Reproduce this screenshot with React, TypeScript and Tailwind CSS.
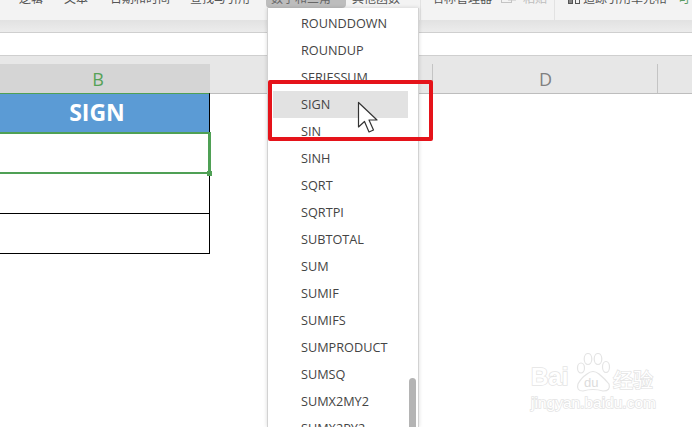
const FONT = "font-['Open_Sans','Noto_Sans',sans-serif]";
const ITEMS = ["ROUNDDOWN","ROUNDUP","SERIESSUM","SIGN","SIN","SINH","SQRT","SQRTPI","SUBTOTAL","SUM","SUMIF","SUMIFS","SUMPRODUCT","SUMSQ","SUMX2MY2","SUMX2PY2"];
const TABS: [string, string][] = [["逻辑","w-[45px]"],["文本","w-[46px]"],["日期和时间","w-[80px]"],["查找与引用","w-[76px]"]];
const CJK = "font-['Noto_Sans_CJK_SC',sans-serif]";

function Toolbar() {
  return (
    <div className="h-[20px] bg-[#f3f3f3] overflow-hidden">
      <div className={`flex items-start -mt-[8px] pl-[19px] h-[28px] text-[12px] leading-[12px] text-[#555] whitespace-nowrap ${CJK}`}>
        {TABS.map(([t, w]) => <span key={t} className={`${w} h-[16px]`}>{t}</span>)}
        <span className="w-[80px] h-[16px] rounded-b-[4px] bg-[#bdbdbd] pl-[5px] text-[#666]">数学和三角</span>
        <span className="w-[74px] pl-[6px]">其他函数</span>
        <span className="w-px h-[28px] bg-[#e2e2e2]" />
        <span className="w-[80px] pl-[11px]">名称管理器</span>
        <svg className="mt-[1px] mr-[7px]" width="15" height="11" viewBox="0 0 15 11" fill="none" stroke="#c4c4c4">
          <rect x="0.5" y="0.5" width="10" height="9" />
          <rect x="7.5" y="-3" width="7" height="10" fill="#f3f3f3" />
        </svg>
        <span className="w-[31px] text-[#bdbdbd]">粘贴</span>
        <span className="w-px h-[28px] bg-[#e2e2e2]" />
        <svg className="mt-[1px] ml-[13px] mr-[3px]" width="12" height="11" viewBox="0 0 12 11" fill="none" stroke="#555">
          <rect x="3.5" y="0.5" width="5" height="3" />
          <rect x="0.5" y="6.5" width="4" height="4" fill="#888" />
          <rect x="7.5" y="6.5" width="4" height="4" />
        </svg>
        <span className="w-[95px]">追踪引用单元格</span>
        <span className="text-[#5a9c62]">可</span>
      </div>
    </div>
  );
}

function ColumnHeaders() {
  return (
    <div className="h-[38px] bg-[#e7e7e7] pt-[8px] flex border-b border-[#bdbdbd] text-[18px] leading-[30px] text-[#808080]">
      <div className="w-[210px] bg-[#d5d5d5] text-center text-[#55a257] pr-[14px]">B</div>
      <div className="w-[223px] border-r border-[#c4c4c4]" />
      <div className="w-[225px] border-r border-[#c4c4c4] text-center pl-[1px]">D</div>
    </div>
  );
}

function Sheet() {
  return (
    <div className="w-[210px] -mt-[2px]">
      <div className="h-[40px] bg-[#5b9bd5] border-t-[2px] border-[#4fa055] border-r border-r-black flex items-center justify-center pr-[15px] pb-[2px] text-white text-[23px] font-bold">SIGN</div>
      <div className="relative h-[42px] w-[211px] bg-white border-[#4fa055] border-y-[2px] border-r-[3px]">
        <div className="absolute right-[-4px] bottom-[-4px] w-[5px] h-[5px] bg-[#4fa055]" />
      </div>
      <div className="h-[40px] border-r border-b border-black" />
      <div className="h-[40px] border-r border-b border-black" />
    </div>
  );
}

function Menu() {
  return (
    <div className="absolute left-[267px] top-[8px] w-[152px] h-[419px] bg-white border-x border-[#d2d2d2] shadow-[0_0_4px_rgba(0,0,0,0.15)] overflow-hidden pt-[2px]">
      {ITEMS.map((t) => (
        <div key={t} className={`h-[27px] leading-[27px] ml-[5px] w-[135px] pl-[28px] text-[12.7px] text-[#444] ${t === "SIGN" ? "bg-[#e2e2e2]" : ""}`}>
          {t}
        </div>
      ))}
      <div className="absolute left-[141px] top-[370px] w-[7px] h-[60px] rounded-full bg-[#b4b4b4]" />
    </div>
  );
}

function Cursor() {
  return (
    <svg className="absolute left-[357px] top-[101px]" width="22" height="33" viewBox="0 0 22 33">
      <path d="M1.5 1.5 L1.5 26 L7.5 20.5 L12 31 L16.5 29 L12 19 L20 19 Z" fill="#fff" stroke="#333" strokeWidth="1.2" strokeLinejoin="round" />
    </svg>
  );
}

const OUTLINE = "text-white [-webkit-text-stroke:1.5px_#e4e4e4] [paint-order:stroke_fill]";

function Watermark() {
  return (
    <div className="absolute left-[531px] top-[353px] w-[126px] flex flex-col">
      <div className="flex items-end h-[40px]">
        <span className={`w-[44px] text-[24px] leading-[30px] mb-[1px] font-bold font-['Liberation_Sans',sans-serif] ${OUTLINE}`}>Bai</span>
        <div className="relative w-[37px] h-[40px]">
          <svg width="37" height="40" viewBox="0 0 37 40" fill="#fff" stroke="#e4e4e4" strokeWidth="1.2">
            <ellipse cx="6" cy="15" rx="3.5" ry="5" />
            <ellipse cx="13" cy="6" rx="3.8" ry="5.5" />
            <ellipse cx="23" cy="6" rx="3.8" ry="5.5" />
            <ellipse cx="31" cy="14" rx="3.5" ry="5.5" />
            <path d="M3 31 Q6 25 12 21 Q18 16 24 21 Q30 26 34 31 Q36 38 28 38 Q18 35 8 38 Q1 38 3 31 Z" />
          </svg>
          <span className="absolute left-[9px] top-[22px] text-[13px] leading-[16px] text-[#dcdcdc] font-['Liberation_Sans',sans-serif]">du</span>
        </div>
        <span className={`ml-[1px] text-[20px] leading-[26px] whitespace-nowrap ${CJK} ${OUTLINE}`}>经验</span>
      </div>
      <span className={`mt-[1px] text-[15.5px] leading-[18px] whitespace-nowrap font-['Liberation_Sans',sans-serif] ${OUTLINE}`}>jingyan.baidu.com</span>
    </div>
  );
}

export default function App() {
  return (
    <div className={`relative w-[692px] h-[427px] overflow-hidden bg-white ${FONT}`}>
      <Toolbar />
      <div className="h-[13px] bg-gradient-to-b from-[#e2e2e2] to-[#ececec] border-b border-[#cfcfcf]" />
      <div className="h-[23px] bg-white border-b border-[#cfcfcf]" />
      <ColumnHeaders />
      <Sheet />
      <Menu />
      <div className="absolute left-[268px] top-[80px] w-[165px] h-[61px] border-[4px] border-[#e5131a] rounded-[2px]" />
      <Cursor />
      <Watermark />
    </div>
  );
}
